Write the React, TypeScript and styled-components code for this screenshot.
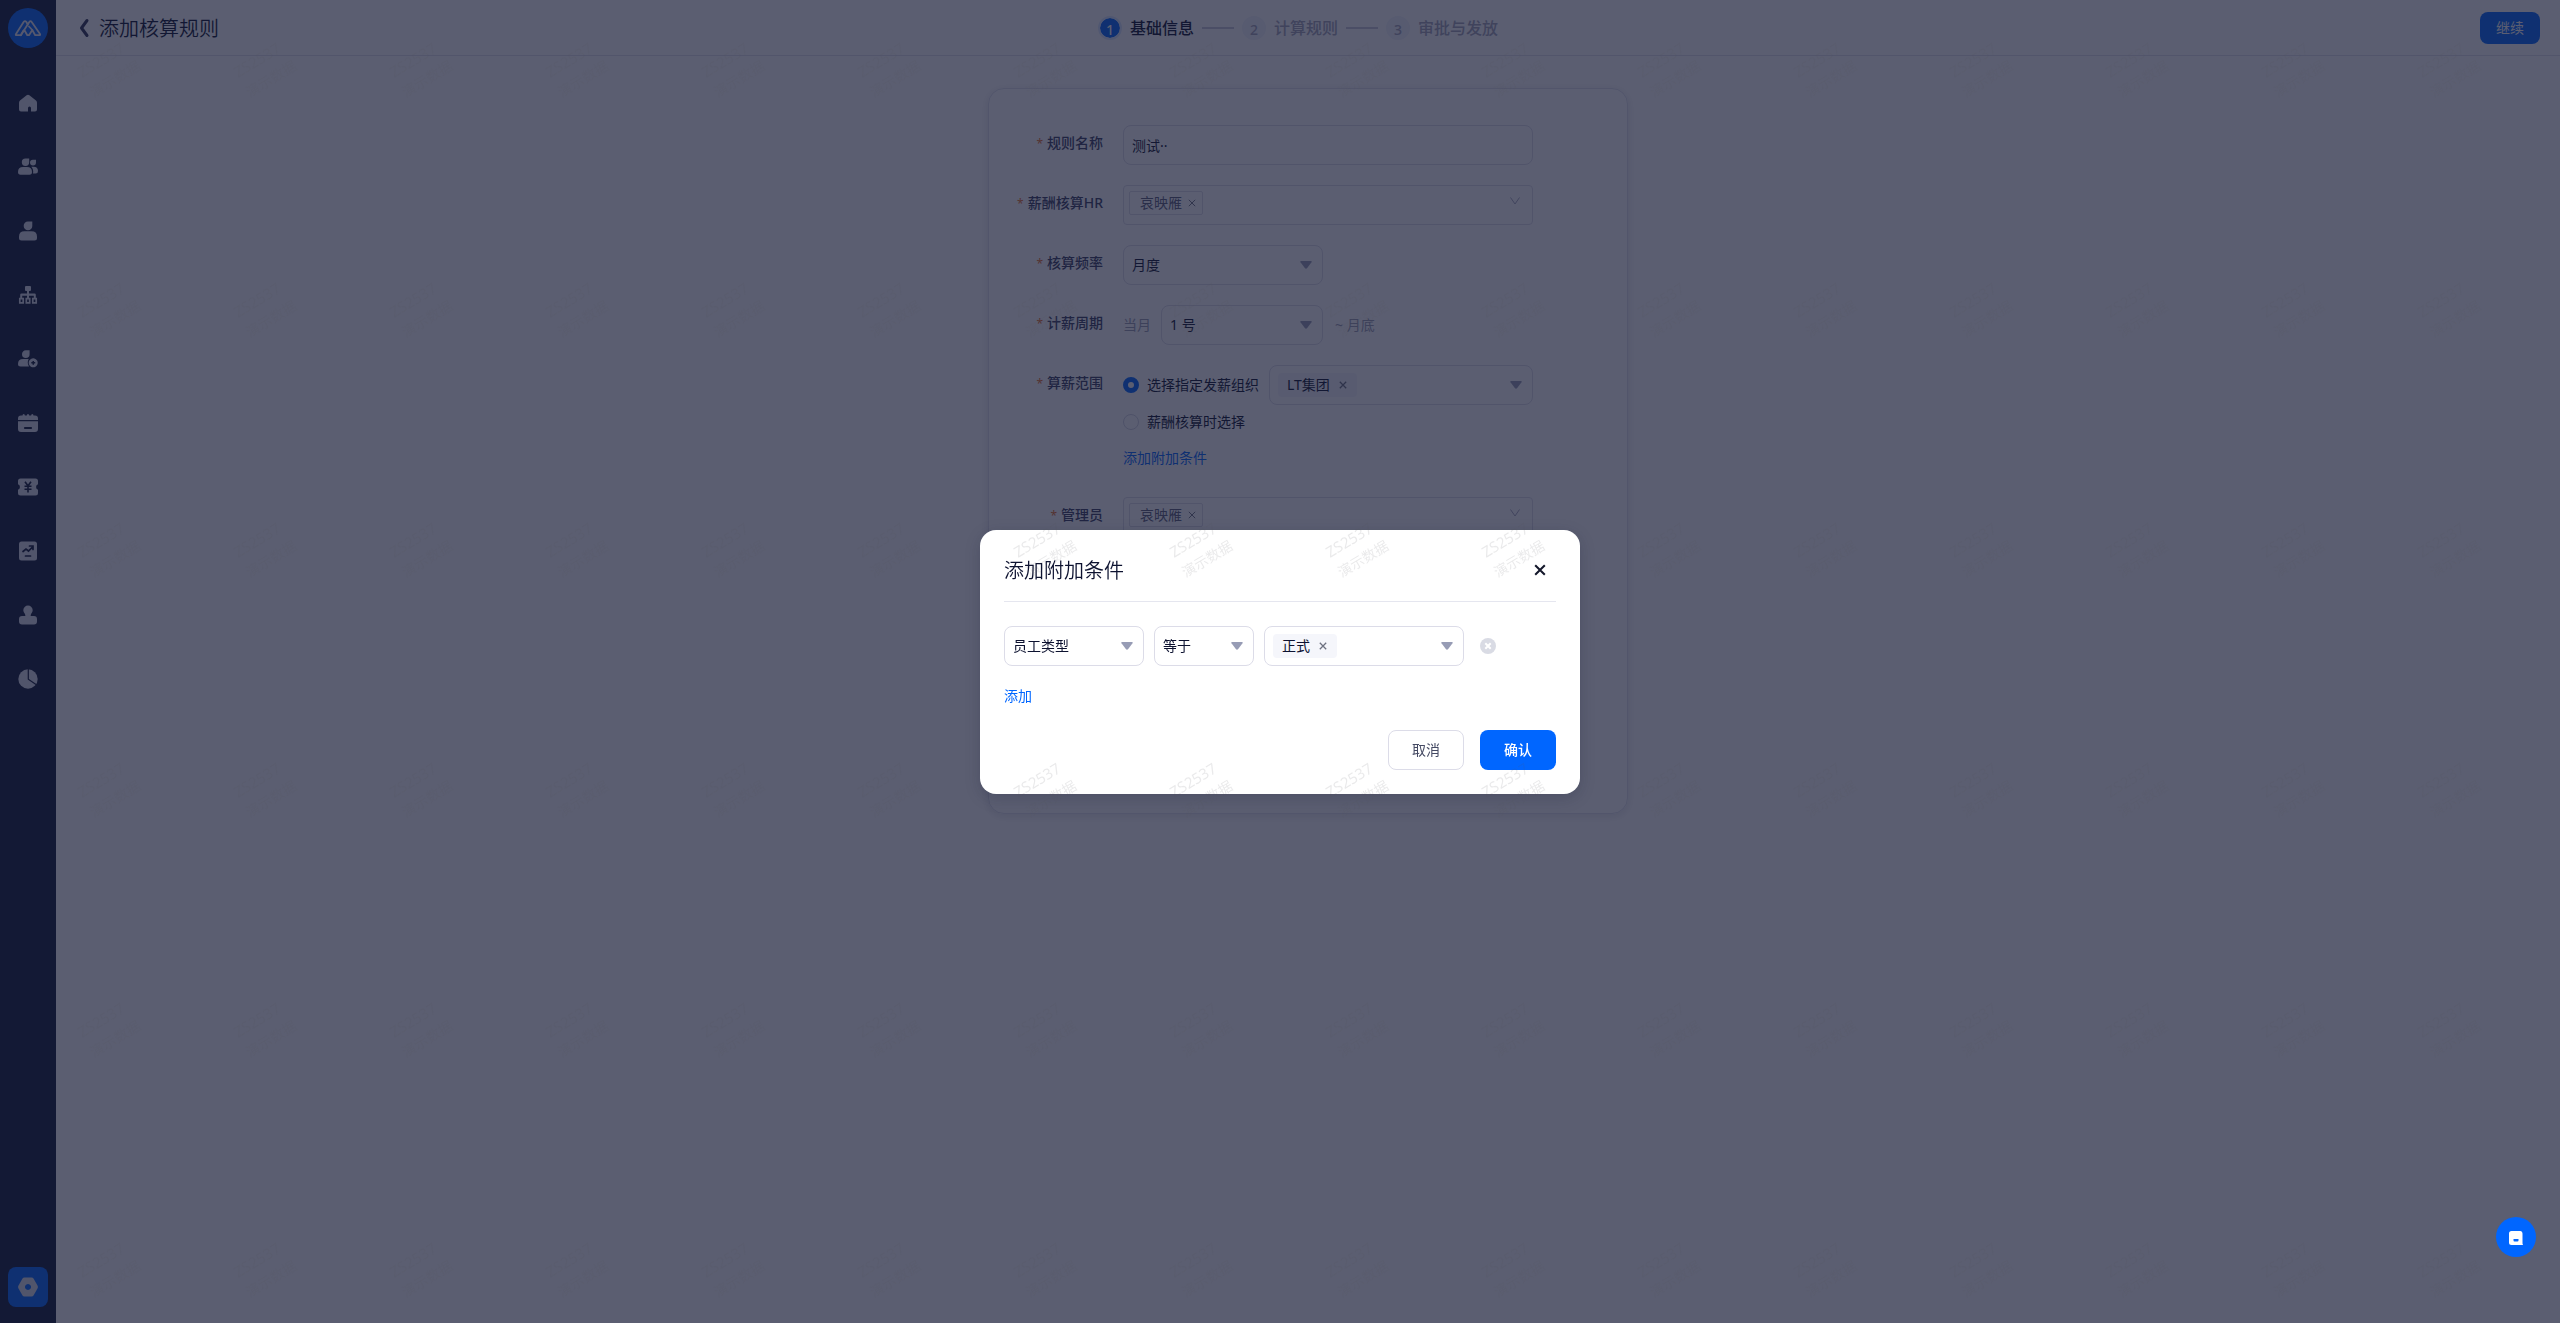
import React from "react";
import styled, { createGlobalStyle, css } from "styled-components";

const c = {
  primary: "#0066ff",
  ink: "#0d1230",
  label: "#3a3f63",
  muted: "#9a9db3",
  border: "#dcdce8",
  tag: "#f5f6fb",
  arrow: "#979cb5",
  rail: "#0f1836",
  icon: "#dcdfea",
};

const GlobalStyle = createGlobalStyle`
  * { box-sizing: border-box; }
  body {
    margin: 0;
    background: #fff;
    color: ${c.ink};
    font: 14px/20px "Noto Sans", "Noto Sans CJK SC", sans-serif;
  }
  button, input, select { font: inherit; color: inherit; }
  button { border: 0; padding: 0; background: none; cursor: pointer; }
`;

/* ---------- shell ---------- */
const Shell = styled.div`
  display: flex;
  min-height: 100vh;
`;
const Rail = styled.nav`
  width: 56px;
  flex: none;
  background: ${c.rail};
  padding: 8px 8px 16px;
  display: flex;
  flex-direction: column;
  align-items: center;
`;
const Logo = styled.a`
  width: 40px;
  height: 40px;
  border-radius: 50%;
  background: ${c.primary};
  display: grid;
  place-items: center;
  margin-bottom: 35px;
`;
const RailList = styled.div`
  display: flex;
  flex-direction: column;
  gap: 24px;
  flex: 1;
`;
const RailButton = styled.button<{ $active?: boolean }>`
  width: 40px;
  height: 40px;
  border-radius: 8px;
  display: grid;
  place-items: center;
  background: ${(p) => (p.$active ? c.primary : "transparent")};
`;
const Page = styled.div`
  flex: 1;
  min-width: 0;
`;
const Header = styled.header`
  height: 56px;
  border-bottom: 1px solid #dfe1ea;
  padding: 0 20px;
  display: grid;
  grid-template-columns: 1fr auto 1fr;
  align-items: center;
`;
const HeaderLeft = styled.div`
  display: flex;
  align-items: center;
  gap: 7px;
`;
const BackButton = styled.button`
  width: 16px;
  height: 20px;
  display: grid;
  place-items: center;
`;
const Title = styled.h1`
  margin: 0;
  font-size: 20px;
  line-height: 34px;
  font-weight: 350;
`;
const PageTitle = styled(Title)`
  padding-top: 2px;
`;
const Steps = styled.ol`
  list-style: none;
  margin: 0;
  padding: 0 20px 0 0;
  display: flex;
  align-items: center;
  gap: 8px;
`;
const Step = styled.li<{ $current?: boolean }>`
  display: flex;
  align-items: center;
  gap: 8px;
  font-size: 16px;
  line-height: 24px;
  font-weight: 500;
  color: ${(p) => (p.$current ? c.ink : "#a3a5ba")};
`;
const StepNumber = styled.span<{ $current?: boolean }>`
  width: 24px;
  height: 24px;
  border-radius: 50%;
  display: grid;
  place-items: center;
  font-size: 14px;
  background: ${(p) => (p.$current ? c.primary : "#f1f3fa")};
  background-clip: padding-box;
  border: 2px solid ${(p) => (p.$current ? "#dbe8ff" : "#f1f3fa")};
  color: ${(p) => (p.$current ? "#fff" : "#a3a5ba")};
`;
const StepLine = styled.li`
  width: 32px;
  height: 2px;
  background: #c8cadb;
`;
const Button = styled.button<{ $kind: "primary" | "plain"; $small?: boolean }>`
  height: ${(p) => (p.$small ? 32 : 40)}px;
  padding: 0 ${(p) => (p.$small ? 16 : 24)}px;
  border-radius: 8px;
  ${(p) =>
    p.$kind === "primary"
      ? css`
          background: ${c.primary};
          color: #fff;
          font-weight: ${p.$small ? 400 : 500};
        `
      : css`
          border: 1px solid ${c.border};
          padding: 0 23px;
          background: #fff;
          color: #454a63;
        `}
`;
const HeaderRight = styled.div`
  display: flex;
  justify-content: flex-end;
`;

/* ---------- form ---------- */
const Main = styled.main`
  padding: 32px 24px;
`;
const Card = styled.form`
  max-width: 640px;
  margin: 0 auto;
  padding: 36px 20px 276px 0;
  border: 1px solid #e0e1eb;
  border-radius: 16px;
  box-shadow: 0 2px 8px rgba(20, 26, 60, 0.12);
  display: flex;
  flex-direction: column;
  gap: 20px;
`;
const FieldRow = styled.div`
  display: grid;
  grid-template-columns: 114px 410px;
  gap: 20px;
`;
const Label = styled.label`
  height: 36px;
  line-height: 36px;
  text-align: right;
  font-weight: 500;
  color: ${c.label};
  white-space: nowrap;
`;
const Star = styled.span`
  color: #e8702a;
  font-size: 12px;
  font-weight: 400;
  margin-right: 4px;
`;
const Inline = styled.div`
  display: flex;
  align-items: center;
  gap: 10px;
`;
const Muted = styled.span`
  color: ${c.muted};
`;
const PeriodEnd = styled(Muted)`
  padding-left: 2px;
`;
const box = css`
  height: 40px;
  border: 1px solid ${c.border};
  border-radius: 8px;
  background: #fff;
  padding: 0 8px;
`;
const TextInput = styled.input`
  ${box}
  width: 100%;
`;
const SelectWrap = styled.span<{ $width: number }>`
  ${box}
  display: flex;
  align-items: center;
  width: ${(p) => p.$width}px;
  padding: 0;
`;
const NativeSelect = styled.select`
  appearance: none;
  width: 100%;
  height: 100%;
  margin-right: -22px;
  padding: 0 22px 0 8px;
  border: 0;
  border-radius: 8px;
  background: transparent;
`;
const ArrowSvg = styled.svg`
  flex: none;
  margin-right: 10px;
  pointer-events: none;
`;
const TagBox = styled.div<{ $width?: number; $square?: boolean }>`
  ${box}
  display: flex;
  align-items: center;
  justify-content: space-between;
  ${(p) => (p.$width ? `width: ${p.$width}px;` : "flex: 1;")}
  ${(p) =>
    p.$square &&
    css`
      border-radius: 4px;
      padding: 5px 11px 8px 5px;
      align-items: flex-start;
    `}
  & > svg {
    margin-right: ${(p) => (p.$square ? 0 : 2)}px;
    ${(p) => p.$square && "margin-top: 5px;"}
  }
`;
const Tag = styled.span<{ $outlined?: boolean }>`
  height: 24px;
  display: inline-flex;
  align-items: center;
  gap: 9px;
  padding: 0 10px 0 9px;
  border-radius: 4px;
  background: ${c.tag};
  line-height: 22px;
  ${(p) =>
    p.$outlined &&
    css`
      background: #fff;
      border: 1px solid ${c.border};
      border-radius: 2px;
      padding: 0 6px 0 10px;
      gap: 6px;
      color: #5c607a;
    `}
`;
const IconButton = styled.button`
  display: inline-grid;
  place-items: center;
`;
const RadioLabel = styled.label`
  display: flex;
  align-items: center;
  gap: 8px;
  white-space: nowrap;
`;
const Radio = styled.input`
  appearance: none;
  width: 16px;
  height: 16px;
  margin: 0;
  border: 1px solid #d3d4e2;
  border-radius: 50%;
  background: #fff;
  &:checked {
    border: 5px solid ${c.primary};
  }
`;
const RadioLine = styled.div`
  height: 34px;
  display: flex;
  align-items: center;
`;
const Link = styled.button<{ $tall?: boolean }>`
  display: block;
  color: ${c.primary};
  line-height: ${(p) => (p.$tall ? 38 : 20)}px;
`;

/* ---------- dialog ---------- */
const Mask = styled.div`
  position: fixed;
  inset: 0;
  display: grid;
  place-items: center;
  background: rgba(22, 26, 53, 0.7);
`;
const Dialog = styled.section`
  width: 600px;
  padding: 24px;
  border-radius: 16px;
  background: #fff;
  box-shadow: 0 4px 16px rgba(15, 20, 50, 0.2);
`;
const DialogHead = styled.div`
  display: flex;
  justify-content: space-between;
  align-items: flex-start;
  padding: 0 10px 13px 0;
  border-bottom: 1px solid #e5e6ef;
  margin-bottom: 24px;
`;
const DialogTitle = styled(Title).attrs({ as: "h2" })``;
const Conditions = styled.div`
  display: flex;
  align-items: center;
  gap: 10px;
  margin-bottom: 20px;
`;
const CloseButton = styled(IconButton)`
  height: 32px;
`;
const RemoveButton = styled(IconButton)`
  margin-left: 6px;
`;
const DialogFoot = styled.div`
  display: flex;
  justify-content: flex-end;
  gap: 16px;
  margin-top: 24px;
`;
const Chat = styled.button`
  position: fixed;
  right: 24px;
  bottom: 66px;
  width: 40px;
  height: 40px;
  border-radius: 50%;
  background: ${c.primary};
  display: grid;
  place-items: center;
  padding-top: 2px;
`;
const MarkLayer = styled.svg`
  position: fixed;
  inset: 0;
  width: 100%;
  height: 100%;
  pointer-events: none;
`;

/* ---------- drawings ---------- */
const Arrow = () => (
  <ArrowSvg width="12" height="8" viewBox="0 0 12 8" aria-hidden>
    <path d="M1.2 0h9.6q1.6 0 .7 1.3L7.2 7q-1.2 1.4-2.4 0L.5 1.300Q-.4 0 1.200 0z" fill={c.arrow} />
  </ArrowSvg>
);
const Chevron = () => (
  <svg width="12" height="10" viewBox="0 0 12 10" fill="none" stroke="#a7aabf" aria-hidden>
    <path d="M1.500 1.500l4.500 6.500 4.500-6.500" />
  </svg>
);
const Cross = ({ size = 8, color = "#6d7180", weight = 1.5 }) => (
  <svg width={size} height={size} viewBox="0 0 10 10" stroke={color} strokeWidth={weight} aria-hidden>
    <path d="M1 1l8 8M9 1l-8 8" />
  </svg>
);

const railIcons: { name: string; art: React.ReactNode }[] = [
  { name: "首页", art: <path d="M8.600 1.700Q10 .6 11.400 1.700L18 7q1 .9 1 2.200V16q0 2-2 2h-4v-3.500a1.500 1.500 0 0 0-3 0V18H3q-2 0-2-2V9.200Q1 7.900 2 7z" transform="translate(0 .5)" /> },
  {
    name: "团队",
    art: (
      <>
        <path d="M3.800 5.300A3.700 3.700 0 0 1 7.500 1.600H11.200V5.300a3.700 3.700 0 0 1-7.400 0zM0 15q0-5 5-5h4q5 0 5 5 0 2.700-2.500 2.700h-9Q0 17.700 0 15z" />
        <path d="M12 5.600A2.900 2.900 0 0 1 15 2.800h3v2.800a3 3 0 0 1-6 0zM13.300 9.700h2.200Q20 9.700 20 14q0 2.500-2.300 2.500H15q.8-4-1.700-6.800z" />
      </>
    ),
  },
  { name: "员工", art: <path d="M5.700 5A4.200 4.200 0 0 1 10 .6h4.300V5a4.300 4.300 0 0 1-8.600 0zM1 15.500Q1 10.300 6.500 10.300h7q5.500 0 5.500 5.200V17q0 2.500-2.500 2.500h-13Q1 19.500 1 17z" /> },
  {
    name: "组织",
    art: (
      <>
        <path d="M8 1h4q1 0 1 1v3q0 1-1 1h-1v2.500h5.500q1.300 0 1.300 1.300V13h-2v-2.300H11V13H9v-2.300H4.200V13h-2V9.800q0-1.300 1.300-1.300H9V6H8Q7 6 7 5V2q0-1 1-1z" />
        <path d="M1.800 13.600h3.400v4.200H1.800zM8.300 13.600h3.400v4.200H8.300zM14.800 13.600h3.400v4.200h-3.400z" fill="none" stroke={c.icon} strokeWidth="1.700" />
      </>
    ),
  },
  {
    name: "入职",
    art: (
      <>
        <path d="M4 5.300A3.800 3.800 0 0 1 7.800 1.300H11.600v4a3.800 3.800 0 0 1-7.600 0zM0 15q0-5 5-5h5.700q-2 3.700.3 7.500H2.500Q0 17.500 0 15z" />
        <path fillRule="evenodd" d="M15.200 9.300a4.500 4.500 0 1 0 .01 0zM14.500 11.900h1.500v1.200h1.200v1.500H16v1.200h-1.500v-1.200h-1.200v-1.500h1.200z" />
      </>
    ),
  },
  {
    name: "考勤",
    art: (
      <>
        <path d="M4.500 2.500q0-1.500 1.200-1.500t1.200 1.500h1.900q0-1.500 1.200-1.500t1.200 1.500h1.900q0-1.500 1.200-1.500t1.200 1.500H17q3 0 3 3V7H0V5.500q0-3 3-3z" />
        <path fillRule="evenodd" d="M0 8.200h20V16q0 3-3 3H3q-3 0-3-3zM7 14q-1.100 0-1.100 1T7 16h6q1.100 0 1.100-1T13 14z" />
      </>
    ),
  },
  {
    name: "薪酬",
    art: (
      <>
        <path d="M2.500 1.500h15Q20 1.500 20 4v3.200a3 3 0 0 0 0 5.600V16q0 2.500-2.500 2.500h-15Q0 18.500 0 16v-3.200a3 3 0 0 0 0-5.600V4q0-2.500 2.500-2.500z" />
        <path d="M7 4.800l3 4 3-4M10 8.800v6.700M6.500 9.300h7M6.500 12.300h7" fill="none" stroke={c.rail} strokeWidth="1.600" />
      </>
    ),
  },
  {
    name: "报表",
    art: (
      <>
        <rect x="1" y=".5" width="18" height="19" rx="2.500" />
        <path d="M5 10.500l3-2.500 2.500 2L15 5.500M11.500 5h3.500v3.500M7.500 15h5" fill="none" stroke={c.rail} strokeWidth="1.700" strokeLinecap="round" />
      </>
    ),
  },
  { name: "审批", art: <path d="M10 .5a4.700 4.700 0 0 1 4.700 4.700c0 2.500-2 3.200-2 5V11H16q3 0 3 3v2.500q0 3-3 3H4q-3 0-3-3V14q0-3 3-3h3.300v-.8c0-1.800-2-2.500-2-5A4.700 4.700 0 0 1 10 .5z" /> },
  {
    name: "统计",
    art: (
      <>
        <circle cx="10" cy="10" r="9.700" />
        <path d="M10.300 0v10.300l7.700 5.200" fill="none" stroke={c.rail} strokeWidth="1.200" />
      </>
    ),
  },
];

/* ---------- parts ---------- */
function Select({ id, value, width, name }: { id?: string; value: string; width: number; name?: string }) {
  return (
    <SelectWrap $width={width}>
      <NativeSelect id={id} aria-label={name} defaultValue={value}>
        <option>{value}</option>
      </NativeSelect>
      <Arrow />
    </SelectWrap>
  );
}

function TagField({ text, width, outlined, name }: { text: string; width?: number; outlined?: boolean; name: string }) {
  return (
    <TagBox $width={width} $square={outlined} role="group" aria-label={name}>
      <Tag $outlined={outlined}>
        {text}
        <IconButton type="button" aria-label={`移除${text}`}>
          <Cross weight={outlined ? 1.2 : 1.6} />
        </IconButton>
      </Tag>
      {outlined ? <Chevron /> : <Arrow />}
    </TagBox>
  );
}

function Field({ label, htmlFor, children }: { label: string; htmlFor?: string; children: React.ReactNode }) {
  return (
    <FieldRow>
      <Label htmlFor={htmlFor} as={htmlFor ? "label" : "span"}>
        <Star>*</Star>
        {label}
      </Label>
      {children}
    </FieldRow>
  );
}

function RuleForm() {
  return (
    <Card>
      <Field label="规则名称" htmlFor="rule-name">
        <TextInput id="rule-name" defaultValue="测试··" />
      </Field>
      <Field label="薪酬核算HR">
        <TagField text="哀映雁" outlined name="薪酬核算HR" />
      </Field>
      <Field label="核算频率" htmlFor="frequency">
        <Select id="frequency" value="月度" width={200} />
      </Field>
      <Field label="计薪周期" htmlFor="cycle">
        <Inline>
          <Muted>当月</Muted>
          <Select id="cycle" value="1 号" width={162} />
          <PeriodEnd>~ 月底</PeriodEnd>
        </Inline>
      </Field>
      <Field label="算薪范围">
        <div>
          <Inline>
            <RadioLabel>
              <Radio type="radio" name="scope" defaultChecked />
              选择指定发薪组织
            </RadioLabel>
            <TagField text="LT集团" name="发薪组织" />
          </Inline>
          <RadioLine>
            <RadioLabel>
              <Radio type="radio" name="scope" />
              薪酬核算时选择
            </RadioLabel>
          </RadioLine>
          <Link type="button" $tall>添加附加条件</Link>
        </div>
      </Field>
      <Field label="管理员">
        <TagField text="哀映雁" outlined name="管理员" />
      </Field>
    </Card>
  );
}

function ConditionDialog() {
  return (
    <Mask>
      <Dialog role="dialog" aria-modal="true" aria-labelledby="dialog-title">
        <DialogHead>
          <DialogTitle id="dialog-title">添加附加条件</DialogTitle>
          <CloseButton aria-label="关闭">
            <Cross size={12} color="#14182b" weight={1.7} />
          </CloseButton>
        </DialogHead>
        <Conditions>
          <Select value="员工类型" width={140} name="条件字段" />
          <Select value="等于" width={100} name="比较方式" />
          <TagField text="正式" width={200} name="条件值" />
          <RemoveButton aria-label="删除条件">
            <svg width="16" height="16" viewBox="0 0 16 16" aria-hidden>
              <circle cx="8" cy="8" r="8" fill="#d9dbe4" />
              <path d="M5.300 5.300l5.400 5.400M10.700 5.300l-5.400 5.400" stroke="#fff" strokeWidth="2" />
            </svg>
          </RemoveButton>
        </Conditions>
        <Link type="button">添加</Link>
        <DialogFoot>
          <Button $kind="plain">取消</Button>
          <Button $kind="primary">确认</Button>
        </DialogFoot>
      </Dialog>
    </Mask>
  );
}

export default function App() {
  return (
    <>
      <GlobalStyle />
      <Shell>
        <Rail>
          <Logo href="#" aria-label="主页">
            <svg width="28" height="18" viewBox="0 0 28 18" fill="none" stroke="#e9ecf5" strokeWidth="1.800" strokeLinejoin="round" strokeLinecap="round" aria-hidden>
              <path d="M9.500 11.500L6.800 16.200H2.500Q1.300 16.200 2 15L9.800 2.800Q11 1.300 12.200 2.800L13.800 5.500" />
              <path d="M6.800 16.200L15.300 3Q16.500 1.300 17.700 3L26 15q.6 1.200-.8 1.200h-4L18.300 11l-3.300 5.200h-1.700L10.200 10.800" />
              <path d="M15 7.500L18.300 11" />
            </svg>
          </Logo>
          <RailList>
            {railIcons.map((icon) => (
              <RailButton key={icon.name} aria-label={icon.name}>
                <svg width="20" height="20" viewBox="0 0 20 20" fill={c.icon} aria-hidden>
                  {icon.art}
                </svg>
              </RailButton>
            ))}
          </RailList>
          <RailButton $active aria-label="设置">
            <svg width="20" height="20" viewBox="0 0 20 20" fill={c.icon} aria-hidden>
              <path fillRule="evenodd" d="M6.300.6h7.400q1.200 0 1.800 1l4 7q.8 1.400 0 2.800l-4 7q-.6 1-1.800 1H6.300q-1.200 0-1.800-1l-4-7q-.8-1.400 0-2.800l4-7q.6-1 1.800-1zM10 7a3 3 0 1 0 .01 0z" />
            </svg>
          </RailButton>
        </Rail>
        <Page>
          <Header>
            <HeaderLeft>
              <BackButton aria-label="返回">
                <svg width="12" height="20" viewBox="0 0 12 20" fill="none" stroke="#2f3354" strokeWidth="3" strokeLinecap="round" strokeLinejoin="round" aria-hidden>
                  <path d="M9 2.500L3.500 10l5.500 7.500" />
                </svg>
              </BackButton>
              <PageTitle>添加核算规则</PageTitle>
            </HeaderLeft>
            <Steps>
              <Step $current>
                <StepNumber $current>1</StepNumber>基础信息
              </Step>
              <StepLine aria-hidden />
              <Step>
                <StepNumber>2</StepNumber>计算规则
              </Step>
              <StepLine aria-hidden />
              <Step>
                <StepNumber>3</StepNumber>审批与发放
              </Step>
            </Steps>
            <HeaderRight>
              <Button $kind="primary" $small>继续</Button>
            </HeaderRight>
          </Header>
          <Main>
            <RuleForm />
          </Main>
        </Page>
      </Shell>
      <ConditionDialog />
      <Chat aria-label="在线客服">
        <svg width="14" height="14" viewBox="0 0 14 14" aria-hidden>
          <path fillRule="evenodd" d="M2.500 0h9Q13.500 0 13.500 2.500V12.500l.5 1.500H2.500Q0 14 0 11.500v-9Q0 0 2.500 0zM4.500 8v1.500q0 1 1 1h3q1 0 1-1V8z" fill="#fff" />
        </svg>
      </Chat>
      <MarkLayer aria-hidden>
        <defs>
          <pattern id="mark" width="156" height="240" patternUnits="userSpaceOnUse">
            <g transform="translate(82 78) rotate(-31)" fontSize="14" fill="rgba(80, 80, 92, 0.12)">
              <text fontSize="15">ZS2537</text>
              <text y="23">演示数据</text>
            </g>
          </pattern>
        </defs>
        <rect width="100%" height="100%" fill="url(#mark)" />
      </MarkLayer>
    </>
  );
}
